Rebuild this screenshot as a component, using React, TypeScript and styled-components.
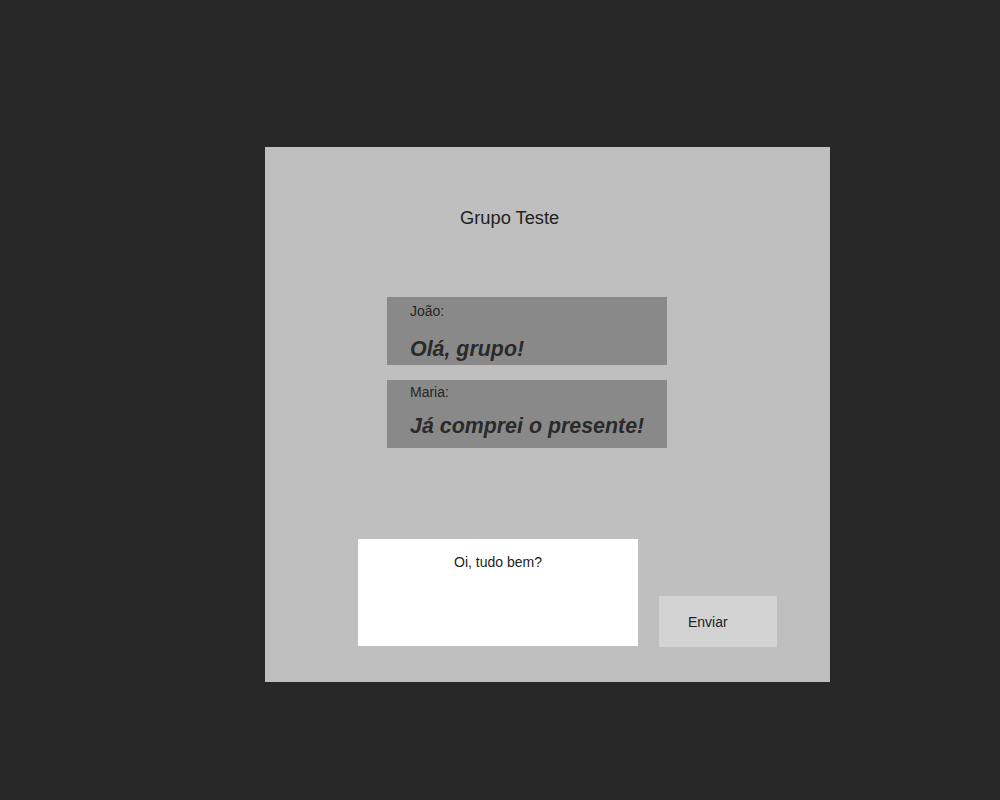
import * as React from 'react'
import styled, { createGlobalStyle } from 'styled-components'

const GlobalStyle = createGlobalStyle`
	html, body {
		margin: 0;
		padding: 0;
		background: #282828;
		font-family: "Liberation Sans", Arial, sans-serif;
	}
`

const Page = styled.div`
	width: 1000px;
	height: 800px;
	padding: 147px 0 0 265px;
	box-sizing: border-box;
`

const Panel = styled.div`
	width: 565px;
	height: 535px;
	background: #bfbfbf;
	box-sizing: border-box;
	padding-top: 60px;
	display: flex;
	flex-direction: column;
	align-items: flex-start;
`

const Title = styled.h1`
	margin: 0 0 0 195px;
	font-size: 18.3px;
	font-weight: normal;
	line-height: 21px;
	color: #222;
`

const MessageList = styled.div`
	margin: 69px 0 0 122px;
	display: flex;
	flex-direction: column;
	gap: 15px;
`

interface BubbleProps {
	top: number
}
const Bubble = styled.div<BubbleProps>`
	width: 280px;
	height: 68px;
	box-sizing: border-box;
	overflow: hidden;
	background: #898989;
	padding: ${({ top }) => top}px 0 0 23px;
`

const Author = styled.div`
	font-size: 14px;
	line-height: 16px;
	color: #262626;
`

interface TextProps {
	gap: number
}
const Text = styled.div<TextProps>`
	margin-top: ${({ gap }) => gap}px;
	font-size: 21.4px;
	line-height: 24px;
	font-weight: bold;
	font-style: italic;
	color: #2a2a2a;
	white-space: nowrap;
`

const Composer = styled.div`
	margin: 91px 0 0 93px;
	display: flex;
	align-items: flex-end;
	gap: 21px;
`

const Input = styled.textarea`
	width: 280px;
	height: 107px;
	box-sizing: border-box;
	border: none;
	outline: none;
	resize: none;
	background: #fff;
	padding: 15px 8px 0;
	text-align: center;
	font-family: "Liberation Sans", Arial, sans-serif;
	font-size: 14px;
	line-height: 16px;
	color: #222;
`

const SendButton = styled.button`
	width: 118px;
	height: 51px;
	margin-bottom: -1px;
	border: none;
	background: #d3d3d3;
	padding: 0 0 0 29px;
	text-align: left;
	font-family: "Liberation Sans", Arial, sans-serif;
	font-size: 14px;
	color: #222;
`

const messages = [
	{ author: 'João', text: 'Olá, grupo!', top: 6, gap: 18 },
	{ author: 'Maria', text: 'Já comprei o presente!', top: 4, gap: 14 },
]

export default function App() {
	return (
		<Page>
			<GlobalStyle />
			<Panel>
				<Title>Grupo Teste</Title>
				<MessageList>
					{messages.map((m) => (
						<Bubble key={m.author} top={m.top}>
							<Author>{m.author}:</Author>
							<Text gap={m.gap}>{m.text}</Text>
						</Bubble>
					))}
				</MessageList>
				<Composer>
					<Input defaultValue="Oi, tudo bem?" />
					<SendButton>Enviar</SendButton>
				</Composer>
			</Panel>
		</Page>
	)
}
